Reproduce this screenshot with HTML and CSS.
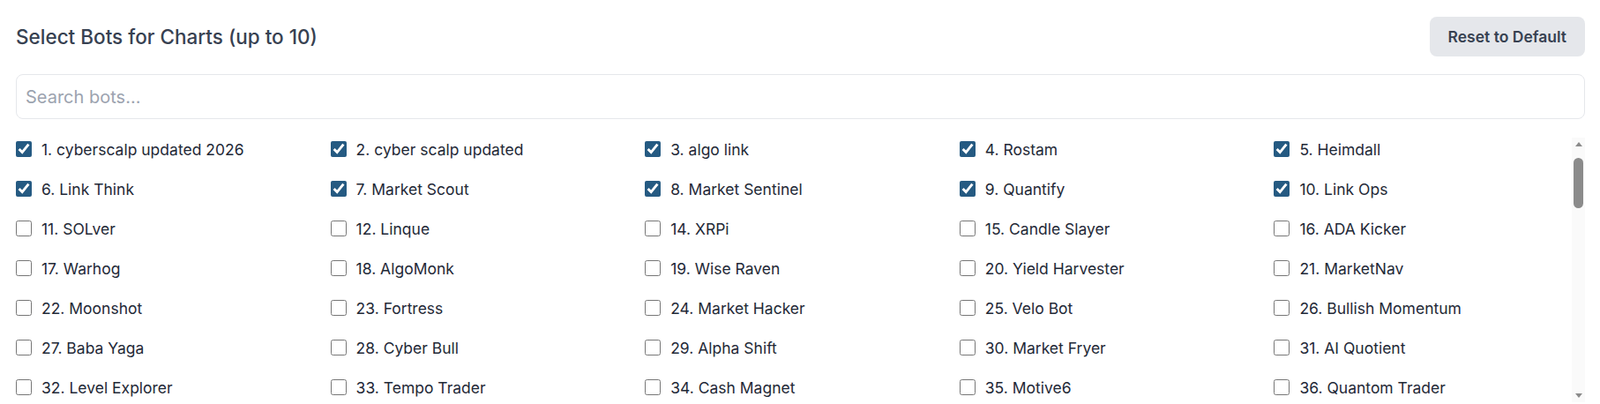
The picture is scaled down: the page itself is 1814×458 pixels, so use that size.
FILE: index.html
```html
<!DOCTYPE html>
<html lang="en">
<head>
    <meta charset="UTF-8">
    <meta name="viewport" content="width=device-width, initial-scale=1.0">
    <title>Select Bots</title>
    <link rel="stylesheet" href="styles.css">
</head>
<body>
    <div class="panel">
        <div class="panel-head">
            <h2 class="panel-title">Select Bots for Charts (up to 10)</h2>
            <button class="reset-btn" type="button" onclick="resetDefault()">Reset to Default</button>
        </div>

        <input type="text" class="search" id="search" placeholder="Search bots..." oninput="renderBots()">

        <div class="list-wrap">
            <div class="bot-list" id="bot-list" onscroll="syncRail()"></div>
            <div class="rail">
                <div class="rail-btn" onclick="scrollList(-45)"><span class="arrow-up"></span></div>
                <div class="rail-track" id="rail-track">
                    <div class="rail-thumb" id="rail-thumb"></div>
                </div>
                <div class="rail-btn" onclick="scrollList(45)"><span class="arrow-down"></span></div>
            </div>
        </div>
    </div>

    <script>
        var names = [
            'cyberscalp updated 2026', 'cyber scalp updated', 'algo link', 'Rostam', 'Heimdall',
            'Link Think', 'Market Scout', 'Market Sentinel', 'Quantify', 'Link Ops',
            'SOLver', 'Linque', null, 'XRPi', 'Candle Slayer', 'ADA Kicker',
            'Warhog', 'AlgoMonk', 'Wise Raven', 'Yield Harvester', 'MarketNav',
            'Moonshot', 'Fortress', 'Market Hacker', 'Velo Bot', 'Bullish Momentum',
            'Baba Yaga', 'Cyber Bull', 'Alpha Shift', 'Market Fryer', 'AI Quotient',
            'Level Explorer', 'Tempo Trader', 'Cash Magnet', 'Motive6', 'Quantom Trader'
        ];

        // the rest of the list sits below the fold
        var extraA = ['Trend', 'Pulse', 'Delta', 'Signal', 'Swing', 'Grid', 'Range', 'Volt', 'Orbit', 'Echo'];
        var extraB = ['Rider', 'Hunter', 'Pilot', 'Scout', 'Engine', 'Keeper', 'Runner', 'Seeker', 'Guard', 'Master', 'Spark', 'Wave'];
        for (var i = 0; names.length < 151; i++) {
            names.push(extraA[i % extraA.length] + ' ' + extraB[Math.floor(i / extraA.length) % extraB.length]);
        }

        var bots = [];
        for (var n = 0; n < names.length; n++) {
            if (names[n] === null) continue;
            bots.push({ id: n + 1, name: names[n], checked: n < 10 });
        }

        function renderBots() {
            var q = document.getElementById('search').value.trim().toLowerCase();
            var html = '';
            for (var k = 0; k < bots.length; k++) {
                var label = bots[k].id + '. ' + bots[k].name;
                if (q && label.toLowerCase().indexOf(q) === -1) continue;
                html += '<label class="bot-item">' +
                    '<input type="checkbox" data-i="' + k + '" onchange="toggleBot(this)"' + (bots[k].checked ? ' checked' : '') + '>' +
                    '<span>' + label + '</span></label>';
            }
            document.getElementById('bot-list').innerHTML = html;
            syncRail();
        }

        // keep the drawn scrollbar in step with the list
        function syncRail() {
            var list = document.getElementById('bot-list');
            var track = document.getElementById('rail-track');
            var thumb = document.getElementById('rail-thumb');
            var room = track.clientHeight - 16;
            var h = Math.max(30, Math.round(room * list.clientHeight / list.scrollHeight));
            var maxScroll = list.scrollHeight - list.clientHeight;
            var top = maxScroll > 0 ? (room - h) * list.scrollTop / maxScroll : 0;
            thumb.style.height = h + 'px';
            thumb.style.transform = 'translateY(' + top + 'px)';
        }

        function scrollList(dy) {
            document.getElementById('bot-list').scrollTop += dy;
        }

        function toggleBot(box) {
            var bot = bots[box.getAttribute('data-i')];
            var count = bots.filter(function (b) { return b.checked; }).length;
            if (box.checked && count >= 10) {
                box.checked = false;
                return;
            }
            bot.checked = box.checked;
        }

        function resetDefault() {
            for (var k = 0; k < bots.length; k++) {
                bots[k].checked = k < 10;
            }
            renderBots();
        }

        renderBots();
    </script>
</body>
</html>
```

FILE: styles.css
```css
body {
    margin: 0;
    background-color: #ffffff;
    font-family: Inter, "Noto Sans", sans-serif;
    color: #1f2937;
}

.panel {
    padding: 19px 17px 0 18px;
}

.panel-head {
    display: flex;
    align-items: center;
    justify-content: space-between;
}

.panel-title {
    margin: 0;
    font-size: 22.5px;
    font-weight: 500;
    color: #374151;
}

.reset-btn {
    height: 45px;
    padding: 0 21px;
    border: none;
    border-radius: 8px;
    background-color: #e5e7eb;
    color: #374151;
    font-family: inherit;
    font-size: 17.5px;
    font-weight: 600;
    cursor: pointer;
}

.search {
    display: block;
    width: 100%;
    box-sizing: border-box;
    margin-top: 20px;
    height: 51px;
    padding: 0 10px;
    border: 1px solid #e5e7eb;
    border-radius: 8px;
    font-family: inherit;
    font-size: 20px;
    color: #1f2937;
    outline: none;
}

.search::placeholder {
    color: #9ca3af;
}

.list-wrap {
    display: flex;
    margin-top: 21px;
    height: 300px;
}

.bot-list {
    flex: 1;
    overflow-y: auto;
    scrollbar-width: none;
    display: grid;
    grid-template-columns: repeat(5, 1fr);
    column-gap: 19px;
    row-gap: 19px;
    align-content: start;
}

.rail {
    width: 15px;
    display: flex;
    flex-direction: column;
    background-color: #fafafa;
}

.rail-btn {
    height: 15px;
    display: flex;
    align-items: center;
    justify-content: center;
    cursor: pointer;
}

.arrow-up {
    border-left: 4.5px solid transparent;
    border-right: 4.5px solid transparent;
    border-bottom: 5px solid #8b8b8b;
}

.arrow-down {
    border-left: 4.5px solid transparent;
    border-right: 4.5px solid transparent;
    border-top: 5px solid #8b8b8b;
}

.rail-track {
    flex: 1;
    padding: 8px 2px;
}

.rail-thumb {
    height: 60px;
    border-radius: 6px;
    background-color: #8b8b8b;
}

.bot-item {
    display: flex;
    align-items: center;
    gap: 11px;
    height: 26px;
    font-size: 17.5px;
    color: #1f2937;
    cursor: pointer;
    white-space: nowrap;
}

.bot-item input {
    width: 18px;
    height: 18px;
    margin: 0;
    accent-color: #255a82;
    cursor: pointer;
}
```
